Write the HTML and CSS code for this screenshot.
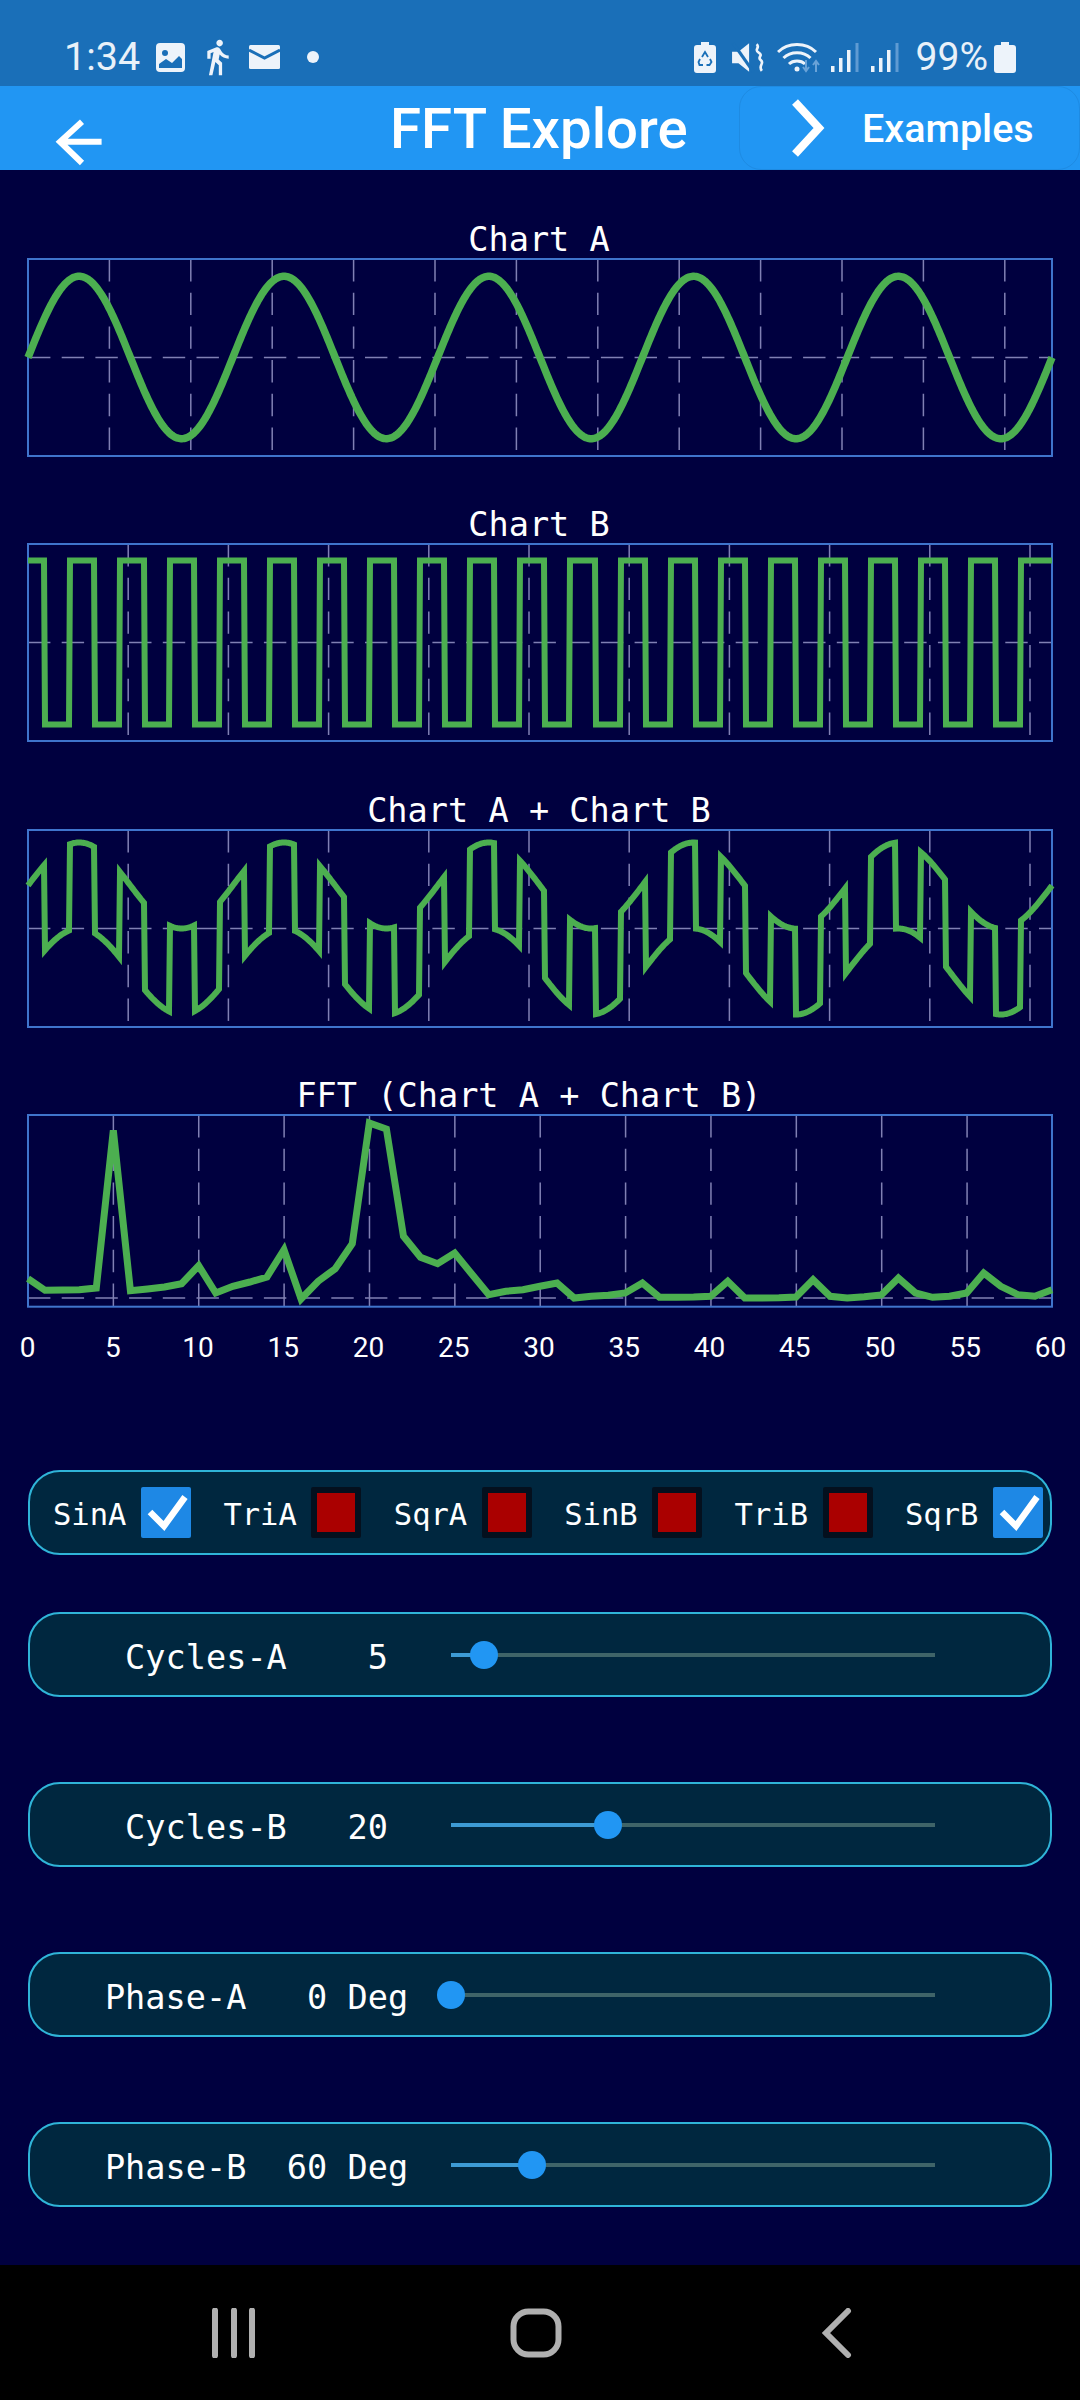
FILE: index.html
```html
<!DOCTYPE html>
<html lang="en">
<head>
    <meta charset="UTF-8">
    <title>FFT Explore</title>
    <link rel="stylesheet" href="styles.css">
</head>
<body>
    <div class="status-bar">
        <div class="status-group">
            <span class="status-text">1:34</span>
            <svg class="ic-image" viewBox="0 0 29 29"><rect width="29" height="29" rx="4" class="light"/><circle cx="9" cy="10" r="3" class="cut"/><path d="M3 25v-4l7-5 6 4 7-7 3 3v9z" class="cut"/></svg>
            <svg class="ic-walk" viewBox="5.5 1 14 22.5"><path class="light" d="M13.5 5.5c1.1 0 2-.9 2-2s-.9-2-2-2-2 .9-2 2 .9 2 2 2zM9.8 8.9L7 23h2.1l1.8-8 2.1 2v6h2v-7.5l-2.1-2 .6-3C14.8 12 16.8 13 19 13v-2c-1.9 0-3.5-1-4.3-2.4l-1-1.6c-.4-.6-1-1-1.7-1-.3 0-.5.1-.8.1L6 8.3V13h2V9.6l1.8-.7"/></svg>
            <svg class="ic-mail" viewBox="0 0 31 24"><rect width="31" height="24" rx="1.5" class="light"/><path d="M0 5l15.5 8L31 5" class="cut-line"/></svg>
            <svg class="ic-dot" viewBox="0 0 12 12"><circle cx="6" cy="6" r="6" class="light"/></svg>
        </div>
        <div class="status-group">
            <svg class="ic-recycle" viewBox="0 0 22 31"><path class="light" d="M7 0h8v3h4a3 3 0 0 1 3 3v22a3 3 0 0 1-3 3H3a3 3 0 0 1-3-3V6a3 3 0 0 1 3-3h4z"/><path class="cut-thin" d="M8 15l3-5 3 5M16 17l1.500 3-2 3h-3M9 23H5.500l-1-3 1.500-3"/></svg>
            <svg class="ic-mute" viewBox="0 0 31 29"><path class="light" d="M1 9h6l10-8v27L7 20H1z"/><path class="cut-line" d="M2 1l19 27"/><path class="light-line" d="M24 2c4 3-3 5 2 8s-2 4 2 7-3 5 1 10"/></svg>
            <svg class="ic-wifi" viewBox="0 0 44 32"><path class="light-arc" d="M1 11c10-10 28-10 38 0M6.500 17c7-7 20-7 27 0M12 23c4-4 12-4 16 0"/><circle cx="20" cy="28" r="2.500" class="light"/><path class="dim-line" d="M29 19v11m-3-4l3 4 3-4M39 31V20m-3 4l3-4 3 4"/></svg>
            <svg class="ic-signal" viewBox="0 0 28 29"><rect x="0" y="23" width="3.500" height="6" class="light"/><rect x="8" y="15" width="3.500" height="14" class="light"/><rect x="16" y="7" width="3.500" height="22" class="light"/><rect x="24.500" y="0" width="3" height="29" class="dim"/></svg>
            <svg class="ic-signal ic-signal-2" viewBox="0 0 28 29"><rect x="0" y="23" width="3.500" height="6" class="light"/><rect x="8" y="15" width="3.500" height="14" class="light"/><rect x="16" y="7" width="3.500" height="22" class="light"/><rect x="24.500" y="0" width="3" height="29" class="dim"/></svg>
            <span class="status-text status-pct">99%</span>
            <svg class="ic-battery" viewBox="0 0 22 31"><path class="light" d="M7 0h8v3h4a3 3 0 0 1 3 3v22a3 3 0 0 1-3 3H3a3 3 0 0 1-3-3V6a3 3 0 0 1 3-3h4z"/></svg>
        </div>
    </div>

    <header class="app-bar">
        <svg class="back-icon" viewBox="0 0 50 50"><path d="M47.600 24.700H6M28 4.700L6 24.700l22 21.300"/></svg>
        <h1 class="app-title">FFT Explore</h1>
        <div class="examples-btn">
            <svg class="next-icon" viewBox="0 0 40 60"><path d="M5 4l24 26L5 56"/></svg>
            <span>Examples</span>
        </div>
    </header>

    <main class="content">
        <section class="chart">
            <div class="chart-title">Chart A</div>
            <svg class="plot" id="chart-a"></svg>
        </section>
        <section class="chart">
            <div class="chart-title">Chart B</div>
            <svg class="plot" id="chart-b"></svg>
        </section>
        <section class="chart">
            <div class="chart-title">Chart A + Chart B</div>
            <svg class="plot" id="chart-c"></svg>
        </section>
        <section class="chart chart-fft">
            <div class="chart-title">FFT (Chart A + Chart B) </div>
            <svg class="plot plot-fft" id="chart-d"></svg>
            <div class="x-axis">
                <span>0</span><span>5</span><span>10</span><span>15</span><span>20</span><span>25</span><span>30</span>
                <span>35</span><span>40</span><span>45</span><span>50</span><span>55</span><span>60</span>
            </div>
        </section>

        <div class="panel checks">
            <div class="check-item"><span class="check-label">SinA</span><span class="box on"><svg viewBox="0 0 50 51"><path d="M9 25l14 14L44 10"/></svg></span></div>
            <div class="check-item"><span class="check-label">TriA</span><span class="box off"></span></div>
            <div class="check-item"><span class="check-label">SqrA</span><span class="box off"></span></div>
            <div class="check-item"><span class="check-label">SinB</span><span class="box off"></span></div>
            <div class="check-item"><span class="check-label">TriB</span><span class="box off"></span></div>
            <div class="check-item"><span class="check-label">SqrB</span><span class="box on"><svg viewBox="0 0 50 51"><path d="M9 25l14 14L44 10"/></svg></span></div>
        </div>

        <div class="panel slider-row">
            <div class="slider-label">Cycles-A    5</div>
            <div class="slider"><div class="slider-fill" style="width: 6.8%"></div><div class="slider-thumb" style="left: 6.8%"></div></div>
        </div>
        <div class="panel slider-row">
            <div class="slider-label">Cycles-B   20</div>
            <div class="slider"><div class="slider-fill" style="width: 32.4%"></div><div class="slider-thumb" style="left: 32.4%"></div></div>
        </div>
        <div class="panel slider-row">
            <div class="slider-label">Phase-A   0 Deg</div>
            <div class="slider"><div class="slider-fill" style="width: 0%"></div><div class="slider-thumb" style="left: 0%"></div></div>
        </div>
        <div class="panel slider-row">
            <div class="slider-label">Phase-B  60 Deg</div>
            <div class="slider"><div class="slider-fill" style="width: 16.7%"></div><div class="slider-thumb" style="left: 16.7%"></div></div>
        </div>
    </main>

    <nav class="nav-bar">
        <svg class="nav-icon" viewBox="0 0 44 50"><path d="M3 2.500v45M22 2.500v45M40 2.500v45"/></svg>
        <svg class="nav-icon" viewBox="0 0 52 50"><rect x="3.500" y="3.500" width="45" height="43" rx="15"/></svg>
        <svg class="nav-icon" viewBox="0 0 32 50"><path d="M27 3L5 25l22 22"/></svg>
    </nav>

    <script src="charts.js"></script>
</body>
</html>
```

FILE: styles.css
```css
* {
    box-sizing: border-box;
}
body {
    margin: 0;
    width: 1080px;
    height: 2400px;
    display: flex;
    flex-direction: column;
    background-color: #00003f;
    color: white;
    font-family: "DejaVu Sans Mono", monospace;
    overflow: hidden;
}

/* status bar */
.status-bar {
    height: 86px;
    padding: 28px 64px 0 64px;
    display: flex;
    justify-content: space-between;
    background-color: #1a6fb8;
}
.status-group {
    display: flex;
    align-items: center;
}
.status-text {
    font-family: Roboto, sans-serif;
    font-size: 39.5px;
    line-height: 58px;
    color: #e9f1f9;
}
.status-pct {
    margin-left: 17px;
    font-size: 39px;
}
.light {
    fill: #edf3fa;
}
.dim {
    fill: #5f9bd3;
}
.cut {
    fill: #1a6fb8;
}
.cut-line {
    fill: none;
    stroke: #1a6fb8;
    stroke-width: 3;
}
.cut-thin {
    fill: none;
    stroke: #1a6fb8;
    stroke-width: 1.8;
}
.light-line {
    fill: none;
    stroke: #edf3fa;
    stroke-width: 2.5;
}
.light-arc {
    fill: none;
    stroke: #edf3fa;
    stroke-width: 3;
}
.dim-line {
    fill: none;
    stroke: #6aa3d8;
    stroke-width: 2;
}
.ic-image {
    width: 29px;
    height: 29px;
    margin-left: 16px;
}
.ic-walk {
    width: 24px;
    height: 37px;
    margin-left: 21px;
}
.ic-mail {
    width: 31px;
    height: 24px;
    margin-left: 19px;
}
.ic-dot {
    width: 12px;
    height: 12px;
    margin-left: 27px;
}
.ic-recycle {
    width: 22px;
    height: 31px;
}
.ic-mute {
    width: 33px;
    height: 31px;
    margin-left: 15px;
}
.ic-wifi {
    width: 44px;
    height: 32px;
    margin-left: 13px;
}
.ic-signal {
    width: 28px;
    height: 29px;
    margin-left: 10px;
}
.ic-signal-2 {
    margin-left: 12px;
}
.ic-battery {
    width: 22px;
    height: 31px;
    margin-left: 6px;
}

/* app bar */
.app-bar {
    height: 84px;
    padding-left: 54px;
    display: flex;
    align-items: center;
    background-color: #2196f3;
}
.back-icon {
    width: 50px;
    height: 50px;
    align-self: flex-end;
    margin-bottom: 3px;
}
.back-icon path {
    fill: none;
    stroke: white;
    stroke-width: 6;
}
.app-title {
    margin: 2px 0 0 286px;
    font-family: Roboto, sans-serif;
    font-size: 56.4px;
    font-weight: 500;
}
.examples-btn {
    margin-left: auto;
    width: 341px;
    height: 84px;
    padding-left: 50px;
    display: flex;
    align-items: center;
    border: 1px solid #1e8be3;
    border-radius: 22px;
    font-family: Roboto, sans-serif;
    font-size: 39.5px;
    font-weight: 500;
}
.next-icon {
    width: 40px;
    height: 60px;
    margin-right: 32px;
}
.next-icon path {
    fill: none;
    stroke: white;
    stroke-width: 8;
}

/* charts */
.content {
    flex: 1;
    padding-top: 43.7px;
}
.chart {
    margin-bottom: 42.6px;
}
.chart-title {
    height: 44px;
    padding: 4px 2px 0 0;
    font-size: 33.6px;
    line-height: 44px;
    text-align: center;
    white-space: pre;
}
.plot {
    display: block;
    width: 1026px;
    height: 199px;
    margin-left: 27px;
    overflow: visible;
}
.plot-fft {
    height: 193.7px;
}
.plot .frame {
    fill: none;
    stroke: #3f74cc;
    stroke-width: 2;
}
.plot .grid {
    stroke: #8080b4;
    stroke-width: 1.5;
    stroke-dasharray: 22.4 11.3;
}
.plot .trace {
    fill: none;
    stroke: #4caf50;
    stroke-width: 6;
}
#chart-a .trace {
    stroke-width: 7.5;
}
#chart-d .trace {
    stroke-width: 7;
}
.chart-fft {
    margin-bottom: 102px;
}
.x-axis {
    width: 1023px;
    height: 40px;
    margin: 20px 0 0 27.5px;
    display: flex;
    justify-content: space-between;
    font-family: Roboto, sans-serif;
    font-size: 28px;
    line-height: 40px;
}
.x-axis span {
    width: 0;
    display: flex;
    justify-content: center;
}

/* controls */
.panel {
    width: 1024px;
    height: 85px;
    margin-left: 28px;
    display: flex;
    align-items: center;
    background-color: #00273f;
    border: 2px solid #2fb4d8;
    border-radius: 32px;
}
.checks {
    padding-left: 23px;
    font-size: 30.5px;
}
.check-item {
    width: 170.4px;
    flex: none;
    display: flex;
    align-items: center;
}
.check-label {
    width: 88px;
    flex: none;
    padding-top: 3px;
}
.box {
    flex: none;
    width: 50px;
    height: 51px;
    border-radius: 2px;
}
.box svg {
    display: block;
}
.box path {
    fill: none;
    stroke: white;
    stroke-width: 6.5;
}
.box.on {
    background-color: #1e88e5;
}
.box.off {
    background-color: #aa0000;
    border: 6px solid #04101e;
}
.slider-row {
    margin-top: 85px;
    padding-left: 32px;
}
.checks + .slider-row {
    margin-top: 57px;
}
.slider-label {
    width: 389px;
    padding-top: 6px;
    font-size: 33.6px;
    text-align: center;
    white-space: pre;
}
.slider {
    position: relative;
    width: 484px;
    height: 4px;
    background-color: #3f6468;
}
.slider-fill {
    height: 4px;
    background-color: #3d9bd4;
}
.slider-thumb {
    position: absolute;
    top: -12px;
    width: 28px;
    height: 28px;
    margin-left: -14px;
    border-radius: 50%;
    background-color: #2196f3;
}

/* navigation */
.nav-bar {
    height: 135px;
    padding-left: 82px;
    display: grid;
    grid-template-columns: repeat(3, 303px);
    justify-items: center;
    align-items: center;
    background-color: black;
}
.nav-icon {
    height: 50px;
}
.nav-icon:nth-child(1) {
    width: 44px;
}
.nav-icon:nth-child(2) {
    width: 52px;
    margin-right: 2px;
}
.nav-icon:nth-child(3) {
    width: 32px;
    margin-right: 6px;
}
.nav-icon path,
.nav-icon rect {
    fill: none;
    stroke: #b0b0b0;
    stroke-width: 6;
    stroke-linecap: round;
}
```

FILE: charts.js
```js
const PLOT_W = 1024;

// magnitudes in px above the zero line, bins 0..60
const FFT_BINS = [
    19.3, 7.7, 8, 8.3, 10, 167.7, 7.3, 9, 11, 14.3, 32.3, 5, 11.7, 16, 21, 48.3,
    -1, 16.7, 29.3, 54.3, 175, 169, 61.7, 40.7, 34.3, 45, 24, 3.3, 6.7, 8.3, 11.7,
    15, 0, 1.7, 2.7, 5, 15, 0.7, 0.7, 1, 1.7, 16.7, 0, 0, 0.3, 1, 18.3, 1.7, 0, 1.3,
    3, 20, 5, 0.7, 1.7, 5, 25, 11.7, 3.3, 1.7, 8.3
];

function sinA(x) {
    return Math.sin(2 * Math.PI * x / 204.8);
}

// square wave, 60 deg phase; holds its last level past x = 1000
function sqrB(x) {
    return Math.sin(2 * Math.PI * Math.min(x, 1000) / 50.03 + Math.PI / 3) > 0 ? 1 : -1;
}

function toPoints(values, zeroY, scale) {
    const dx = PLOT_W / (values.length - 1);
    return values.map((v, i) => `${(1 + i * dx).toFixed(2)},${(zeroY - v * scale).toFixed(2)}`).join(" ");
}

function drawPlot(id, height, zeroY, gridStep, values, scale) {
    let html = "";
    for (let x = 1 + gridStep; x < PLOT_W; x += gridStep) {
        html += `<line class="grid" x1="${x}" x2="${x}" y1="1" y2="${height - 1}"/>`;
    }
    html += `<line class="grid" x1="1" x2="${PLOT_W + 1}" y1="${zeroY}" y2="${zeroY}"/>`;
    html += `<rect class="frame" x="1" y="1" width="${PLOT_W}" height="${height - 2}"/>`;
    html += `<polyline class="trace" points="${toPoints(values, zeroY, scale)}"/>`;
    document.getElementById(id).innerHTML = html;
}

const xs = Array.from({ length: PLOT_W + 1 }, (_, i) => i);

drawPlot("chart-a", 199, 99.5, 81.4, xs.map(sinA), 81.2);
drawPlot("chart-b", 199, 99.5, 100.2, xs.map(sqrB), 82);
drawPlot("chart-c", 199, 99.5, 100.2, xs.map(x => sinA(x) + sqrB(x)), 43);
drawPlot("chart-d", 193.7, 184, 85.37, FFT_BINS, 1);
```
